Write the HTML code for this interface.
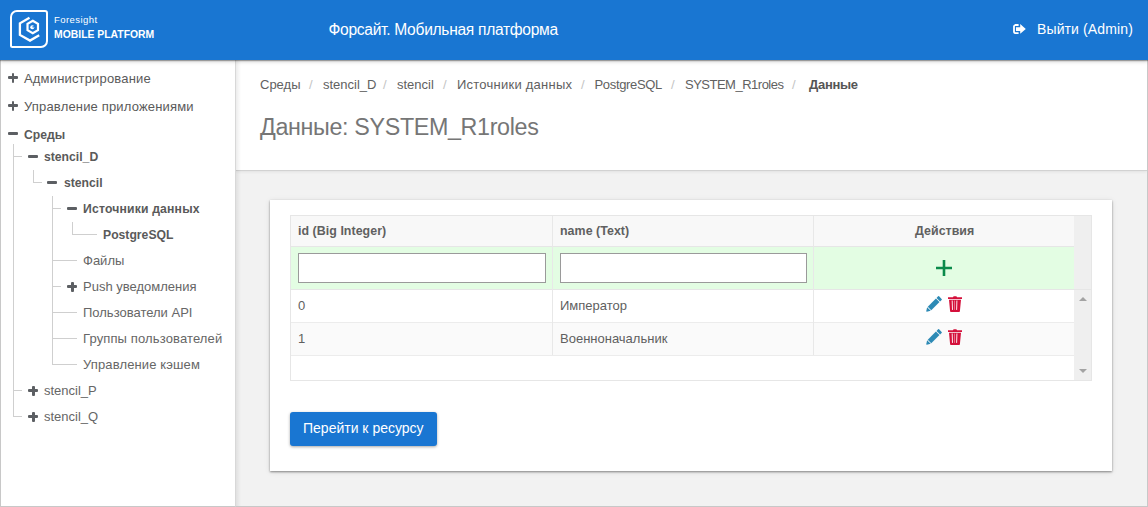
<!DOCTYPE html>
<html><head><meta charset="utf-8">
<style>
*{box-sizing:border-box;margin:0;padding:0}
html,body{width:1148px;height:507px;overflow:hidden;background:#fff;font-family:"Liberation Sans",sans-serif}
.a{position:absolute;white-space:nowrap;line-height:1}
#hdr{position:absolute;left:0;top:0;width:1148px;height:60px;background:#1976d2;z-index:5;box-shadow:0 1px 1px rgba(0,0,0,.28),0 1px 4px rgba(0,0,0,.27)}
#side{position:absolute;left:0;top:60px;width:236px;height:447px;background:#fff;border-left:1px solid #c8c8c8;border-bottom:1px solid #c8c8c8;border-right:1px solid #d8d8d8}
#main{position:absolute;left:236px;top:60px;width:912px;height:447px;background:#f2f2f2;border-right:1px solid #c8c8c8;border-bottom:1px solid #c8c8c8;overflow:hidden}
#panel{position:absolute;left:0;top:0;width:911px;height:111px;background:#fff;border-bottom:1px solid #d2d2d2;box-shadow:0 1px 3px rgba(0,0,0,.07)}
#mshadow{position:absolute;left:0;top:0;width:5px;height:447px;background:linear-gradient(to right,rgba(0,0,0,.075),rgba(0,0,0,0));z-index:3}
.sb{color:#5a5a5a;font-size:13px}
.sb2{color:#666}
.sbb{color:#5a5a5a;font-size:12.2px;font-weight:bold}
.ic{position:absolute;background:#5c5f63;border-radius:1px}
.vl{position:absolute;width:1px;background:#cfcfcf}
.hl{position:absolute;height:1px;background:#cfcfcf}
.bc{color:#616161;font-size:13px}
.sep{color:#c4c4c4;font-size:13px}
#card{position:absolute;left:34px;top:140px;width:842px;height:271px;background:#fff;box-shadow:0 1px 2px rgba(0,0,0,.42),0 1px 6px rgba(0,0,0,.1)}
.th{color:#606060;font-size:12.4px;font-weight:bold;letter-spacing:0.05px}
.td{color:#5f5f5f;font-size:13px}
</style></head><body>
<div id="hdr">
  <svg class="a" style="left:10px;top:10px" width="38" height="38" viewBox="0 0 38 38">
    <path d="M7,1 H35 A2,2 0 0 1 37,3 V31 A6,6 0 0 1 31,37 H2.5 A1.5,1.5 0 0 1 1,35.5 V7 A6,6 0 0 1 7,1 Z" fill="none" stroke="#fff" stroke-width="2"/>
    <path d="M19.5,7.8 L9.9,13.3 V24.9 L20,30.6 L29.2,25.2" fill="none" stroke="#fff" stroke-width="2.3" stroke-linejoin="miter"/>
    <path d="M22.75,10.7 L28,13.85 V20.15 L22.75,23.3 L17.5,20.15 V13.85 Z" fill="none" stroke="#fff" stroke-width="2.2"/>
    <circle cx="22.3" cy="17.3" r="2.05" fill="#fff"/><rect x="22.5" y="16.2" width="2.2" height="1.3" fill="#1976d2"/>
  </svg>
  <div class="a" style="left:54px;top:15px;color:#fff;font-size:9.5px;letter-spacing:0.45px">Foresight</div>
  <div class="a" style="left:54px;top:30px;color:#fff;font-size:10.4px;font-weight:bold">MOBILE PLATFORM</div>
  <div class="a" style="left:328.5px;top:22.4px;color:#fff;font-size:15.6px;letter-spacing:-0.3px">Форсайт. Мобильная платформа</div>
  <svg class="a" style="left:1012px;top:23px" width="16" height="12" viewBox="0 0 16 12">
    <path d="M6.6,2 H3.2 A1.7,1.7 0 0 0 2,3.2 V9 A1.7,1.7 0 0 0 3.2,10.2 H6.6" fill="none" stroke="#fff" stroke-width="1.8"/>
    <path d="M4,4.3 H8.2 V1 L13.8,5.9 L8.2,10.8 V7.9 H4 Z" fill="#fff"/>
  </svg>
  <div class="a" style="left:1037px;top:22px;color:#fff;font-size:14px;letter-spacing:0.12px">Выйти (Admin)</div>
</div>

<div id="side">
  <!-- top level -->
  <div class="ic" style="left:7px;top:16.4px;width:10px;height:2.8px"></div>
  <div class="ic" style="left:10.7px;top:12.8px;width:2.8px;height:10px"></div>
  <div class="a sb" style="left:23px;top:12px;letter-spacing:0.17px">Администрирование</div>
  <div class="ic" style="left:7px;top:44.4px;width:10px;height:2.8px"></div>
  <div class="ic" style="left:10.7px;top:40.8px;width:2.8px;height:10px"></div>
  <div class="a sb" style="left:23px;top:40px;letter-spacing:0.17px">Управление приложениями</div>
  <div class="ic" style="left:7px;top:72px;width:10px;height:3px"></div>
  <div class="a sbb" style="left:23px;top:69px">Среды</div>

  <!-- level1 line -->
  <div class="vl" style="left:12px;top:84px;height:272px"></div>
  <div class="hl" style="left:12px;top:96px;width:9px"></div>
  <div class="ic" style="left:27px;top:95px;width:10px;height:3px"></div>
  <div class="a sbb" style="left:43px;top:91px">stencil_D</div>

  <div class="vl" style="left:32px;top:110px;height:13px"></div>
  <div class="hl" style="left:32px;top:122px;width:9px"></div>
  <div class="ic" style="left:46px;top:121px;width:10px;height:3px"></div>
  <div class="a sbb" style="left:63px;top:117px">stencil</div>

  <div class="vl" style="left:51px;top:136px;height:169px"></div>
  <div class="hl" style="left:51px;top:148px;width:9px"></div>
  <div class="ic" style="left:66px;top:147px;width:10px;height:3px"></div>
  <div class="a sbb" style="left:82px;top:143px;letter-spacing:0.18px">Источники данных</div>

  <div class="vl" style="left:71px;top:162px;height:13px"></div>
  <div class="hl" style="left:71px;top:174px;width:25px"></div>
  <div class="a sbb" style="left:102px;top:169px">PostgreSQL</div>

  <div class="hl" style="left:51px;top:200px;width:25px"></div>
  <div class="a sb sb2" style="left:82px;top:194px">Файлы</div>
  <div class="hl" style="left:51px;top:226px;width:9px"></div>
  <div class="ic" style="left:66px;top:225px;width:10px;height:3px"></div>
  <div class="ic" style="left:69.5px;top:221.5px;width:3px;height:10px"></div>
  <div class="a sb sb2" style="left:82px;top:220px">Push уведомления</div>
  <div class="hl" style="left:51px;top:252px;width:25px"></div>
  <div class="a sb sb2" style="left:82px;top:246px">Пользователи API</div>
  <div class="hl" style="left:51px;top:278px;width:25px"></div>
  <div class="a sb sb2" style="left:82px;top:272px;letter-spacing:0.13px">Группы пользователей</div>
  <div class="hl" style="left:51px;top:304px;width:25px"></div>
  <div class="a sb sb2" style="left:82px;top:298px;letter-spacing:0.13px">Управление кэшем</div>

  <div class="hl" style="left:12px;top:330px;width:9px"></div>
  <div class="ic" style="left:27px;top:329px;width:10px;height:3px"></div>
  <div class="ic" style="left:30.5px;top:325.5px;width:3px;height:10px"></div>
  <div class="a sb sb2" style="left:43px;top:324px">stencil_P</div>
  <div class="hl" style="left:12px;top:356px;width:9px"></div>
  <div class="ic" style="left:27px;top:355px;width:10px;height:3px"></div>
  <div class="ic" style="left:30.5px;top:351.5px;width:3px;height:10px"></div>
  <div class="a sb sb2" style="left:43px;top:350px">stencil_Q</div>
</div>

<div id="main">
  <div id="mshadow"></div>
  <div id="panel">
    <div class="a bc" style="left:24px;top:18px">Среды</div>
    <div class="a sep" style="left:73px;top:18px">/</div>
    <div class="a bc" style="left:87px;top:18px">stencil_D</div>
    <div class="a sep" style="left:147px;top:18px">/</div>
    <div class="a bc" style="left:161px;top:18px">stencil</div>
    <div class="a sep" style="left:207px;top:18px">/</div>
    <div class="a bc" style="left:221px;top:18px;letter-spacing:0.24px">Источники данных</div>
    <div class="a sep" style="left:345px;top:18px">/</div>
    <div class="a bc" style="left:358.5px;top:18px;letter-spacing:-0.33px">PostgreSQL</div>
    <div class="a sep" style="left:435px;top:18px">/</div>
    <div class="a bc" style="left:449px;top:18px;letter-spacing:-0.5px">SYSTEM_R1roles</div>
    <div class="a sep" style="left:556px;top:18px">/</div>
    <div class="a bc" style="left:573px;top:18px;font-weight:bold;color:#555;letter-spacing:-0.3px">Данные</div>
    <div class="a" style="left:24px;top:56px;font-size:23.3px;color:#767676;letter-spacing:-0.35px">Данные: SYSTEM_R1roles</div>
  </div>

  <div id="card">
  </div>
</div>

<div id="tbl">
  <div class="a" style="left:290px;top:215px;width:802px;height:166px;border:1px solid #e6e6e6;background:#fff"></div>
  <div class="a" style="left:291px;top:216px;width:783px;height:30px;background:#f8f8f8"></div>
  <div class="a" style="left:291px;top:247px;width:783px;height:42px;background:#e3fde3"></div>
  <div class="a" style="left:291px;top:323px;width:783px;height:32px;background:#fafafa"></div>
  <div class="a" style="left:1074px;top:216px;width:17px;height:164px;background:#efefef"></div>
  <div class="a" style="left:291px;top:246px;width:783px;height:1px;background:#e6e6e6"></div>
  <div class="a" style="left:291px;top:289px;width:800px;height:1px;background:#e6e6e6"></div>
  <div class="a" style="left:291px;top:322px;width:783px;height:1px;background:#ececec"></div>
  <div class="a" style="left:291px;top:355px;width:783px;height:1px;background:#ececec"></div>
  <div class="a" style="left:552px;top:216px;width:1px;height:139px;background:#e8e8e8"></div>
  <div class="a" style="left:813px;top:216px;width:1px;height:139px;background:#e8e8e8"></div>
  <div class="a th" style="left:298px;top:225px">id (Big Integer)</div>
  <div class="a th" style="left:560px;top:225px">name (Text)</div>
  <div class="a th" style="left:915px;top:225px">Действия</div>
  <div class="a" style="left:298px;top:253px;width:248px;height:30px;border:1px solid #9a9a9a;background:#fff"></div>
  <div class="a" style="left:560px;top:253px;width:247px;height:30px;border:1px solid #9a9a9a;background:#fff"></div>
  <svg class="a" style="left:936px;top:260px" width="16" height="16" viewBox="0 0 16 16"><path d="M8,0 V16 M0,8 H16" stroke="#0a8a4a" stroke-width="2.6"/></svg>
  <div class="a td" style="left:298px;top:299px">0</div>
  <div class="a td" style="left:560px;top:299px">Император</div>
  <div class="a td" style="left:298px;top:332px">1</div>
  <div class="a td" style="left:560px;top:332px">Военноначальник</div>
  <svg class="a" style="left:1079px;top:296px" width="8" height="6" viewBox="0 0 8 6"><path d="M0,5 L4,1 L8,5 Z" fill="#a3a3a3"/></svg>
  <svg class="a" style="left:1079px;top:368px" width="8" height="6" viewBox="0 0 8 6"><path d="M0,1 L4,5 L8,1 Z" fill="#a3a3a3"/></svg>
  <svg class="a" style="left:925px;top:296.3px" width="18" height="17" viewBox="0 0 18 17">
    <g transform="translate(1.5,15.5) rotate(-45)">
      <path d="M0,-0.4 L3.4,-2.5 V2.5 L0,0.4 Z" fill="#2d8ab5"/>
      <rect x="4.25" y="-2.5" width="11.6" height="5" fill="#2d8ab5"/>
      <path d="M16.7,-2.5 H18.9 A0.7,0.7 0 0 1 19.6,-1.8 V1.8 A0.7,0.7 0 0 1 18.9,2.5 H16.7 Z" fill="#2d8ab5"/>
    </g></svg>
  <svg class="a" style="left:947px;top:296.3px" width="16" height="17" viewBox="0 0 16 17">
    <path d="M1,1.2 H15 V3.1 H1 Z M6.6,0.2 H9.4 L10,1.3 H6 Z" fill="#d4103b"/>
    <path d="M2,3.8 H14 L12.9,15.2 A0.8,0.8 0 0 1 12.1,16 H3.9 A0.8,0.8 0 0 1 3.1,15.2 Z" fill="#d4103b"/>
    <path d="M5.2,4.5 L5.5,13.9 M9.9,4.5 L9.6,13.9" stroke="#fff" stroke-width="0.9"/><path d="M7.55,4.5 V13.9" stroke="#fff" stroke-width="0.6" opacity="0.7"/>
  </svg>
  <svg class="a" style="left:925px;top:329.3px" width="18" height="17" viewBox="0 0 18 17">
    <g transform="translate(1.5,15.5) rotate(-45)">
      <path d="M0,-0.4 L3.4,-2.5 V2.5 L0,0.4 Z" fill="#2d8ab5"/>
      <rect x="4.25" y="-2.5" width="11.6" height="5" fill="#2d8ab5"/>
      <path d="M16.7,-2.5 H18.9 A0.7,0.7 0 0 1 19.6,-1.8 V1.8 A0.7,0.7 0 0 1 18.9,2.5 H16.7 Z" fill="#2d8ab5"/>
    </g></svg>
  <svg class="a" style="left:947px;top:329.3px" width="16" height="17" viewBox="0 0 16 17">
    <path d="M1,1.2 H15 V3.1 H1 Z M6.6,0.2 H9.4 L10,1.3 H6 Z" fill="#d4103b"/>
    <path d="M2,3.8 H14 L12.9,15.2 A0.8,0.8 0 0 1 12.1,16 H3.9 A0.8,0.8 0 0 1 3.1,15.2 Z" fill="#d4103b"/>
    <path d="M5.2,4.5 L5.5,13.9 M9.9,4.5 L9.6,13.9" stroke="#fff" stroke-width="0.9"/><path d="M7.55,4.5 V13.9" stroke="#fff" stroke-width="0.6" opacity="0.7"/>
  </svg>
</div>
<div class="a" style="left:290px;top:412px;width:147px;height:34px;background:#1976d2;border-radius:3px;box-shadow:0 1px 3px rgba(0,0,0,.35)"></div>
<div class="a" style="left:303px;top:421.2px;font-size:14px;color:#fff">Перейти к ресурсу</div>
</body></html>
